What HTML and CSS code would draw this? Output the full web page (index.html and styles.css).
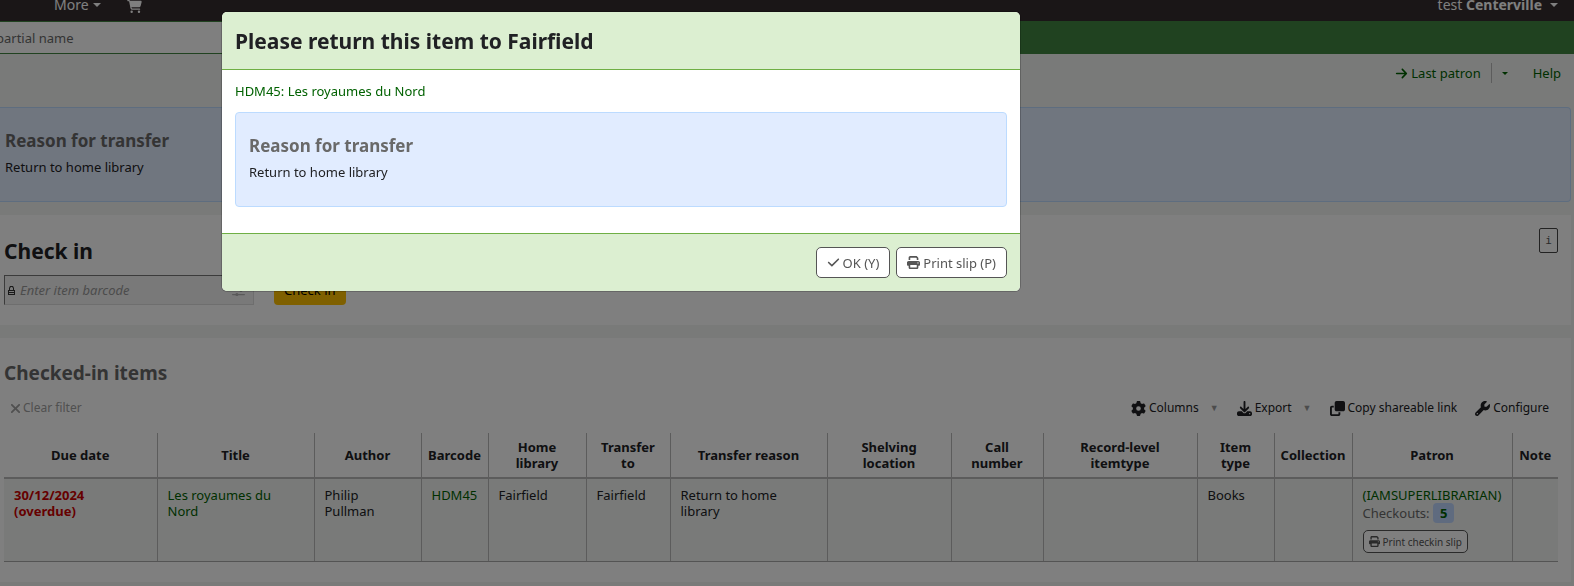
FILE: index.html
```html
<!DOCTYPE html>
<html lang="en">
<head>
  <meta charset="UTF-8">
  <meta name="viewport" content="width=device-width, initial-scale=1.0">
  <title>Check in</title>
  <link rel="stylesheet" href="styles.css">
</head>
<body>
  <!-- Shared icons -->
  <svg class="sprite" aria-hidden="true">
    <symbol id="i-print" viewBox="0 0 512 512"><path d="M128 0C92.700 0 64 28.700 64 64v96h64V64h226.700L384 93.300V160h64V93.300c0-17-6.700-33.300-18.700-45.300L400 18.700C388 6.700 371.700 0 354.700 0H128zm256 352v96H128v-96h256zm64 32h32c17.700 0 32-14.300 32-32v-96c0-35.300-28.700-64-64-64H64c-35.300 0-64 28.700-64 64v96c0 17.700 14.300 32 32 32h32v64c0 35.300 28.700 64 64 64h256c35.300 0 64-28.700 64-64v-64zM432 248a24 24 0 1 1 0 48 24 24 0 1 1 0-48z"/></symbol>
    <symbol id="i-check" viewBox="0 0 448 512"><path d="M438.600 105.400c12.500 12.500 12.500 32.800 0 45.300l-256 256c-12.500 12.500-32.800 12.500-45.300 0l-128-128c-12.500-12.500-12.500-32.800 0-45.300s32.800-12.500 45.300 0L160 338.700 393.400 105.400c12.500-12.500 32.800-12.500 45.300 0z"/></symbol>
    <symbol id="i-arrow" viewBox="0 0 448 512"><path d="M438.600 278.600c12.500-12.500 12.500-32.800 0-45.300l-160-160c-12.500-12.500-32.800-12.500-45.300 0s-12.500 32.800 0 45.300L338.800 224H32c-17.700 0-32 14.300-32 32s14.300 32 32 32h306.700L233.400 393.400c-12.500 12.500-12.500 32.800 0 45.300s32.800 12.500 45.300 0l160-160z"/></symbol>
    <symbol id="i-times" viewBox="0 0 384 512"><path d="M342.600 150.600c12.500-12.500 12.500-32.800 0-45.300s-32.800-12.500-45.300 0L192 210.700 86.600 105.400c-12.500-12.500-32.800-12.500-45.300 0s-12.500 32.800 0 45.300L146.700 256 41.400 361.400c-12.500 12.500-12.500 32.800 0 45.300s32.800 12.500 45.300 0L192 301.300l105.400 105.300c12.500 12.500 32.800 12.500 45.300 0s12.500-32.800 0-45.300L237.300 256l105.300-105.400z"/></symbol>
    <symbol id="i-cart" viewBox="0 0 576 512"><path d="M0 24C0 10.700 10.700 0 24 0h45.500c22 0 41.500 12.800 50.600 32h411c26.300 0 45.500 25 38.600 50.400l-41 152.300c-8.500 31.400-37 53.300-69.500 53.300H170.700l5.400 28.500c2.200 11.300 12.100 19.500 23.600 19.500H488c13.300 0 24 10.700 24 24s-10.700 24-24 24H199.700c-34.600 0-64.300-24.600-70.700-58.500L77.400 54.500c-.7-3.800-4-6.500-7.900-6.500H24C10.700 48 0 37.300 0 24zm128 440a48 48 0 1 1 96 0 48 48 0 1 1-96 0zm336-48a48 48 0 1 1 0 96 48 48 0 1 1 0-96z"/></symbol>
    <symbol id="i-gear" viewBox="0 0 512 512"><path fill-rule="evenodd" d="M495.900 166.600c3.200 8.700.5 18.400-6.400 24.600l-43.300 39.400c1.100 8.300 1.700 16.800 1.700 25.400s-.6 17.100-1.700 25.400l43.300 39.400c6.900 6.200 9.600 15.900 6.400 24.600-4.400 11.900-9.700 23.300-15.800 34.300l-4.700 8.100c-6.600 11-14 21.400-22.100 31.200-5.900 7.200-15.700 9.600-24.500 6.800l-55.700-17.700c-13.400 10.300-28.200 18.900-44 25.400l-12.500 57.100c-2 9.100-9 16.300-18.200 17.800-13.800 2.300-28 3.500-42.500 3.500s-28.700-1.200-42.500-3.500c-9.200-1.500-16.200-8.700-18.200-17.800l-12.500-57.100c-15.800-6.500-30.600-15.100-44-25.400L83.100 425.900c-8.800 2.800-18.600.3-24.500-6.800-8.100-9.800-15.500-20.200-22.100-31.200l-4.700-8.100c-6.100-11-11.400-22.400-15.800-34.300-3.200-8.700-.5-18.400 6.400-24.600l43.300-39.400C64.600 273.100 64 264.600 64 256s.6-17.100 1.700-25.400l-43.300-39.400c-6.900-6.200-9.600-15.900-6.400-24.600 4.400-11.900 9.700-23.300 15.800-34.300l4.700-8.100c6.600-11 14-21.400 22.100-31.200 5.900-7.200 15.700-9.600 24.500-6.800l55.700 17.700c13.400-10.300 28.200-18.900 44-25.400l12.500-57.100c2-9.100 9-16.300 18.200-17.800C227.300 1.200 241.500 0 256 0s28.700 1.200 42.500 3.500c9.200 1.500 16.200 8.700 18.200 17.800l12.500 57.100c15.800 6.500 30.600 15.100 44 25.400l55.700-17.700c8.800-2.800 18.600-.3 24.500 6.800 8.100 9.800 15.500 20.200 22.100 31.200l4.700 8.100c6.100 11 11.400 22.400 15.700 34.400zM256 336a80 80 0 1 0 0-160 80 80 0 1 0 0 160z"/></symbol>
    <symbol id="i-download" viewBox="0 0 512 512"><path d="M288 32c0-17.700-14.300-32-32-32s-32 14.300-32 32v242.700l-73.400-73.400c-12.500-12.500-32.800-12.500-45.300 0s-12.500 32.800 0 45.300l128 128c12.500 12.500 32.800 12.500 45.300 0l128-128c12.500-12.500 12.500-32.800 0-45.300s-32.800-12.500-45.300 0L288 274.700V32zM64 352c-35.300 0-64 28.700-64 64v32c0 35.300 28.700 64 64 64h384c35.300 0 64-28.700 64-64v-32c0-35.300-28.700-64-64-64H346.500l-45.300 45.300c-25 25-65.500 25-90.500 0L165.500 352H64zm368 56a24 24 0 1 1 0 48 24 24 0 1 1 0-48z"/></symbol>
    <symbol id="i-copy" viewBox="0 0 512 512"><path d="M224 0c-35.300 0-64 28.700-64 64v224c0 35.300 28.700 64 64 64h224c35.300 0 64-28.700 64-64V64c0-35.300-28.700-64-64-64H224zM64 160c-35.300 0-64 28.700-64 64v224c0 35.300 28.700 64 64 64h224c35.300 0 64-28.700 64-64v-64h-64v64H64V224h64v-64H64z"/></symbol>
    <symbol id="i-wrench" viewBox="0 0 512 512"><path d="M352 320c88.400 0 160-71.600 160-160 0-15.300-2.200-30.100-6.200-44.200-3.100-10.800-16.400-13.200-24.300-5.300l-76.800 76.800c-3 3-7.100 4.700-11.300 4.700H336c-8.800 0-16-7.200-16-16v-57.400c0-4.200 1.700-8.300 4.700-11.300l76.800-76.800c7.900-7.900 5.400-21.200-5.300-24.300C382.100 2.200 367.300 0 352 0c-88.400 0-160 71.600-160 160 0 19.100 3.400 37.500 9.500 54.500L19.900 396.100C7.200 408.800 0 426.100 0 444.100 0 481.600 30.400 512 67.900 512c18 0 35.300-7.200 48-19.900l181.600-181.600c17 6.200 35.400 9.500 54.500 9.500zM80 408a24 24 0 1 1 0 48 24 24 0 1 1 0-48z"/></symbol>
    <symbol id="i-sliders" viewBox="0 0 512 512"><path d="M0 96a24 24 0 0 1 24-24h190a64 64 0 0 1 116 0h158a24 24 0 0 1 0 48H330a64 64 0 0 1-116 0H24A24 24 0 0 1 0 96zm0 160a24 24 0 0 1 24-24h270a64 64 0 0 1 116 0h78a24 24 0 0 1 0 48h-78a64 64 0 0 1-116 0H24a24 24 0 0 1-24-24zm0 160a24 24 0 0 1 24-24h110a64 64 0 0 1 116 0h238a24 24 0 0 1 0 48H250a64 64 0 0 1-116 0H24a24 24 0 0 1-24-24z"/></symbol>
    <symbol id="i-lock" viewBox="0 0 7 9"><path fill-rule="evenodd" d="M1 4V2l1-2h3l1 2v2h1v5H0V4zm1 0h3V2L4 1H3L2 2zM1 5v1h5V5zM1 7v1h5V7z"/></symbol>
  </svg>

  <!-- Top navigation -->
  <header class="navbar">
    <nav class="nav-left">
      <a href="#top" class="logo">gegage</a>
      <a href="#more">More<span class="caret"></span></a>
      <a href="#cart" aria-label="Cart"><svg class="icon"><use href="#i-cart"/></svg></a>
    </nav>
    <a href="#account" class="account">test <strong>Centerville</strong><span class="caret"></span></a>
  </header>

  <!-- Patron search -->
  <form class="search-bar">
    <input type="text" placeholder="partial name" aria-label="Search patrons">
  </form>

  <div class="sub-nav">
    <a href="#last-patron"><svg class="icon"><use href="#i-arrow"/></svg> Last patron</a>
    <button type="button" class="split" aria-label="Recent patrons"><span class="caret small"></span></button>
    <a href="#help" class="help">Help</a>
  </div>

  <main>
    <section class="message page-message">
      <h3>Reason for transfer</h3>
      <p>Return to home library</p>
    </section>

    <!-- Check in form -->
    <section class="panel checkin">
      <div class="panel-head">
        <h1><label for="barcode">Check in</label></h1>
        <button type="button" class="info" aria-label="Information">i</button>
      </div>
      <form class="checkin-form">
        <div class="barcode-field">
          <svg class="icon lock"><use href="#i-lock"/></svg>
          <input type="text" id="barcode" placeholder="Enter item barcode">
          <svg class="icon"><use href="#i-sliders"/></svg>
        </div>
        <button type="submit" class="submit">Check in</button>
      </form>
    </section>

    <!-- Checked-in items -->
    <section class="panel items">
      <h2>Checked-in items</h2>
      <div class="toolbar">
        <button type="button" class="clear" disabled><svg class="icon"><use href="#i-times"/></svg>Clear filter</button>
        <div class="tools">
          <button type="button"><svg class="icon"><use href="#i-gear"/></svg>Columns<span class="down">▼</span></button>
          <button type="button"><svg class="icon"><use href="#i-download"/></svg>Export<span class="down">▼</span></button>
          <button type="button"><svg class="icon"><use href="#i-copy"/></svg>Copy shareable link</button>
          <button type="button"><svg class="icon"><use href="#i-wrench"/></svg>Configure</button>
        </div>
      </div>
      <table>
        <colgroup>
          <col class="w-due"><col class="w-title"><col class="w-author"><col class="w-barcode">
          <col class="w-home"><col class="w-to"><col class="w-title"><col class="w-shelf">
          <col class="w-call"><col class="w-record"><col class="w-type"><col class="w-coll">
          <col class="w-patron"><col class="w-note">
        </colgroup>
        <thead>
          <tr>
            <th>Due date</th>
            <th>Title</th>
            <th>Author</th>
            <th>Barcode</th>
            <th>Home<br>library</th>
            <th>Transfer<br>to</th>
            <th>Transfer reason</th>
            <th>Shelving<br>location</th>
            <th>Call<br>number</th>
            <th>Record-level<br>itemtype</th>
            <th>Item<br>type</th>
            <th>Collection</th>
            <th>Patron</th>
            <th>Note</th>
          </tr>
        </thead>
        <tbody>
          <tr>
            <td class="overdue">30/12/2024<br>(overdue)</td>
            <td><a href="#title">Les royaumes du Nord</a></td>
            <td>Philip Pullman</td>
            <td><a href="#item">HDM45</a></td>
            <td>Fairfield</td>
            <td>Fairfield</td>
            <td>Return to home library</td>
            <td></td>
            <td></td>
            <td></td>
            <td>Books</td>
            <td></td>
            <td>
              <a href="#patron">(IAMSUPERLIBRARIAN)</a>
              <div class="checkouts">Checkouts: <a href="#checkouts" class="badge">5</a></div>
              <button type="button" class="btn btn-xs"><svg class="icon"><use href="#i-print"/></svg>Print checkin slip</button>
            </td>
            <td></td>
          </tr>
        </tbody>
      </table>
    </section>
  </main>

  <!-- Transfer dialog -->
  <div class="backdrop">
    <div class="modal" role="dialog" aria-modal="true" aria-labelledby="modal-title">
      <div class="modal-header">
        <h1 id="modal-title">Please return this item to Fairfield</h1>
      </div>
      <div class="modal-body">
        <a href="#item">HDM45: Les royaumes du Nord</a>
        <div class="message">
          <h3>Reason for transfer</h3>
          <p>Return to home library</p>
        </div>
      </div>
      <div class="modal-footer">
        <button type="button" class="btn"><svg class="icon"><use href="#i-check"/></svg>OK (Y)</button>
        <button type="button" class="btn"><svg class="icon"><use href="#i-print"/></svg>Print slip (P)</button>
      </div>
    </div>
  </div>
</body>
</html>
```
FILE: styles.css
```css
/* General Styles */
* {
  box-sizing: border-box;
}
body {
  margin: 0;
  font-family: "Noto Sans", sans-serif;
  font-size: 13px;
  line-height: 20px;
  color: #202124;
  background: #f2f5f3;
  overflow: hidden;
}
h1, h2, h3, p {
  margin: 0;
}
h1 {
  font-size: 21px;
  line-height: 28px;
}
h2 {
  font-size: 19px;
  line-height: 26px;
  color: #696969;
}
h3 {
  font-size: 17px;
  line-height: 24px;
  color: #696969;
}
a {
  color: #006100;
  text-decoration: none;
}
button, input {
  font: inherit;
  color: inherit;
}
button {
  cursor: pointer;
  border: 0;
  background: none;
  padding: 0;
}
.sprite {
  display: none;
}
.icon {
  width: 13px;
  height: 13px;
  fill: currentColor;
  flex: none;
}
.caret {
  display: inline-block;
  margin-left: 4px;
  vertical-align: 3px;
  border: 4px solid transparent;
  border-top-color: currentColor;
  border-bottom: 0;
}
.caret.small {
  border-width: 3px;
  border-bottom: 0;
  margin: 0;
}
/* Navigation */
.navbar {
  display: flex;
  justify-content: space-between;
  height: 21px;
  padding-right: 16px;
  background: #352c2e;
  font-size: 14px;
  line-height: 10px;
}
.navbar a {
  color: #fff;
}
.nav-left {
  display: flex;
  gap: 26px;
}
.nav-left .logo {
  width: 28px;
  margin-top: -5px;
  font: italic bold 11px/0 "DejaVu Sans", sans-serif;
  color: #006100;
}
.nav-left .icon {
  width: 15px;
}
.account .caret {
  margin-left: 8px;
}
.search-bar {
  height: 33px;
  padding: 1px 0;
  background: #408540;
}
.search-bar input {
  display: block;
  width: 60%;
  height: 31px;
  margin-left: -4px;
  padding: 0;
  border: 0;
  background: #fff;
}
.search-bar input::placeholder {
  color: #696969;
}
.sub-nav {
  display: flex;
  justify-content: flex-end;
  align-items: center;
  height: 53px;
  padding: 0 13px 15px 0;
}
.sub-nav .icon {
  vertical-align: -2px;
}
.split {
  display: flex;
  align-items: center;
  height: 20px;
  margin-left: 10px;
  padding: 0 25px 0 10px;
  border-left: 1px solid #b9b9b9;
  color: #006100;
}
/* Messages */
.message {
  padding: 21px 13px 24px;
  border: 1px solid #bcdbff;
  border-radius: 4px;
  background: #e1ecff;
}
.message p {
  margin-top: 4px;
}
.page-message {
  margin-right: 3px;
  padding-left: 5px;
  border-left: 0;
  border-radius: 0 4px 4px 0;
}
/* Panels */
.panel {
  margin: 13px 3px 0 0;
  padding: 0 13px 20px 4px;
  background: #fff;
}
.panel-head {
  display: flex;
  justify-content: space-between;
  align-items: flex-start;
  padding-top: 13px;
}
.panel-head h1 {
  padding-top: 9px;
}
.info {
  width: 19px;
  height: 25px;
  border: 1px solid #444;
  border-radius: 2px;
  font-family: "DejaVu Sans Mono", monospace;
  font-size: 11px;
  color: #555;
}
.checkin-form {
  display: flex;
  gap: 20px;
  margin-top: 10px;
}
.barcode-field {
  display: flex;
  align-items: center;
  width: 250px;
  height: 30px;
  padding: 0 8px 0 3px;
  border: 1px solid #ddd;
  border-top-color: #767676;
  border-left-color: #767676;
  background: #f2f2f2;
  color: #b5b5b5;
}
.barcode-field input {
  flex: 1;
  min-width: 0;
  padding: 0 0 0 5px;
  border: 0;
  background: none;
}
.barcode-field input::placeholder {
  color: #999;
  font-style: italic;
}
.lock {
  width: 7px;
  height: 9px;
  color: #333;
}
.submit {
  height: 30px;
  padding: 0 10px;
  border-radius: 4px;
  background: #ffc000;
  color: #000;
}
.items {
  padding-top: 22px;
}
/* Table toolbar */
.toolbar {
  display: flex;
  justify-content: space-between;
  margin-top: 12px;
  padding: 0 9px 0 6px;
  font-size: 12px;
}
.toolbar button {
  display: flex;
  align-items: center;
  gap: 3px;
}
.toolbar .icon {
  width: 15px;
  height: 15px;
}
.toolbar .clear {
  gap: 2px;
  color: #a0a0a0;
}
.toolbar .clear .icon {
  width: 11px;
}
.tools {
  display: flex;
  gap: 18px;
}
.down {
  margin-left: 8px;
  font-size: 9px;
  color: #999;
}
/* Items table */
table {
  width: 100%;
  margin-top: 15px;
  border-collapse: collapse;
  table-layout: fixed;
  line-height: 16px;
}
th, td {
  border-left: 1px solid #b9b9b9;
}
th:first-child, td:first-child {
  border-left: 0;
}
th {
  height: 45px;
  padding: 5px;
  border-bottom: 2px solid #b9b9b9;
}
td {
  height: 83px;
  padding: 8px 9px 8px 10px;
  vertical-align: top;
  background: #f2f5f3;
  border-bottom: 1px solid #a8a8a8;
}
.w-due { width: 153px; }
.w-title { width: 157px; }
.w-author { width: 107px; }
.w-barcode { width: 67px; }
.w-home { width: 98px; }
.w-to { width: 84px; }
.w-shelf { width: 124px; }
.w-call { width: 92px; }
.w-record { width: 154px; }
.w-type { width: 77px; }
.w-coll { width: 78px; }
.w-patron { width: 160px; }
.w-note { width: 46px; }
.overdue {
  color: #c00;
  font-weight: bold;
}
.checkouts {
  line-height: 20px;
  color: #696969;
}
.badge {
  display: inline-block;
  padding: 0 7px;
  border-radius: 4px;
  background: #bfd6ff;
  font-weight: bold;
}
/* Buttons */
.btn {
  display: inline-flex;
  align-items: center;
  gap: 3px;
  height: 31px;
  padding: 0 10px;
  border: 1px solid #555;
  border-radius: 5px;
  background: #fff;
  color: #555;
}
.btn-xs {
  height: 23px;
  margin-top: 7px;
  padding: 0 5px;
  font-size: 10px;
}
.btn-xs .icon {
  width: 11px;
  height: 11px;
}
/* Modal */
.backdrop {
  position: fixed;
  inset: 0;
  padding: 11px 221px;
  background: rgba(0, 0, 0, 0.5);
}
.modal {
  max-width: 800px;
  border: 1px solid rgba(0, 0, 0, 0.2);
  border-radius: 6px;
  background: #fff;
  background-clip: padding-box;
  overflow: hidden;
}
.modal-header {
  padding: 15px 13px 14px;
  border-bottom: 1px solid #6faf44;
  background: #dcefd1;
}
.modal-body {
  padding: 11px 13px 26px;
}
.modal-body .message {
  margin-top: 11px;
}
.modal-footer {
  display: flex;
  justify-content: flex-end;
  gap: 6px;
  padding: 13px;
  border-top: 1px solid #6faf44;
  background: #dcefd1;
}
```
